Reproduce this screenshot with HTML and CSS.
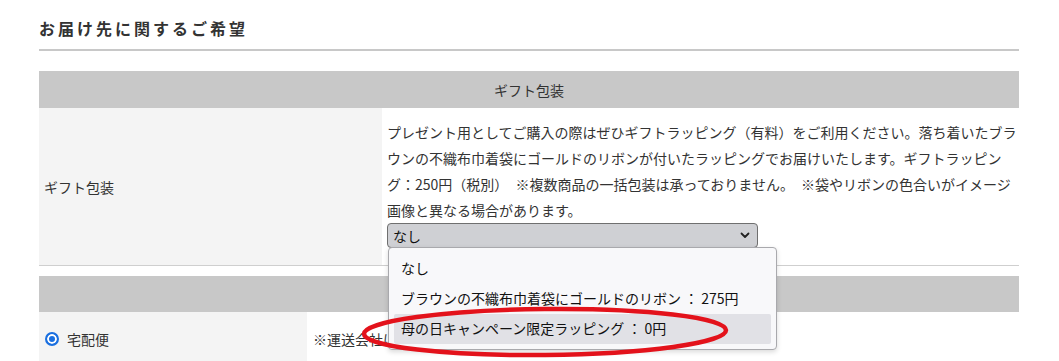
FILE: index.html
```html
<!DOCTYPE html>
<html lang="ja">
<head>
<meta charset="utf-8">
<title>お届け先に関するご希望</title>
<link rel="stylesheet" href="styles.css">
</head>
<body>
<div class="page">
  <h2 class="section-title">お届け先に関するご希望</h2>

  <div class="form-table gift">
    <div class="table-head">ギフト包装</div>
    <div class="table-row">
      <div class="cell-label">ギフト包装</div>
      <div class="cell-body">
        <p class="desc">プレゼント用としてご購入の際はぜひギフトラッピング（有料）をご利用ください。落ち着いたブラウンの不織布巾着袋にゴールドのリボンが付いたラッピングでお届けいたします。ギフトラッピング：250円（税別） ※複数商品の一括包装は承っておりません。 ※袋やリボンの色合いがイメージ画像と異なる場合があります。</p>
        <div class="select-wrap">
          <div class="select-box">
            <span>なし</span>
            <svg class="chevron" width="10" height="7" viewBox="0 0 10 7"><path d="M1.5 1.5 L5 5 L8.5 1.5" fill="none" stroke="#222" stroke-width="1.8" stroke-linecap="round" stroke-linejoin="round"/></svg>
          </div>
          <div class="select-popup">
            <div class="option">なし</div>
            <div class="option">ブラウンの不織布巾着袋にゴールドのリボン ： 275円</div>
            <div class="option option-hover">母の日キャンペーン限定ラッピング ： 0円</div>
          </div>
        </div>
      </div>
    </div>
  </div>

  <div class="form-table delivery">
    <div class="table-head"></div>
    <div class="table-row row-delivery">
      <div class="cell-label"><span class="radio"></span><span class="radio-label">宅配便</span></div>
      <div class="cell-note">※運送会社は指定できませんのでご了承ください。</div>
    </div>
  </div>

  <svg class="annotation" width="400" height="70" viewBox="0 0 400 70">
    <ellipse cx="190" cy="33" rx="181" ry="23" fill="none" stroke="#e3121b" stroke-width="4.5" transform="rotate(-0.6 190 33)"/>
  </svg>
</div>
</body>
</html>
```

FILE: styles.css
```css
html, body {
  margin: 0;
  padding: 0;
  background: #fff;
  overflow: hidden;
}

body {
  font-family: "Noto Sans CJK JP", "Noto Sans", sans-serif;
  color: #333;
  font-size: 14px;
}

.page {
  position: relative;
  width: 980px;
  height: 361px;
  padding-left: 39px;
}

.section-title {
  margin: 0;
  padding: 18px 0 11px;
  font-size: 16px;
  line-height: 20px;
  font-weight: bold;
  letter-spacing: 3px;
  color: #333;
  border-bottom: 2px solid #c8c8c8;
}

.form-table {
  width: 980px;
}

.gift {
  margin-top: 20px;
}

.delivery {
  margin-top: 10px;
}

.table-head {
  background: #c8c8c8;
  height: 37px;
  display: flex;
  align-items: center;
  justify-content: center;
  color: #333;
}

.delivery .table-head {
  height: 36px;
}

.table-row {
  display: grid;
  grid-template-columns: 343px 1fr;
  border-bottom: 1px solid #cfcfcf;
}

.cell-label {
  background: #f4f4f4;
  padding-left: 5px;
  display: flex;
  align-items: center;
}

.cell-body {
  padding: 11px 0 17px 5px;
}

.desc {
  margin: 0;
  line-height: 26px;
  width: 632px;
  word-spacing: 4px;
}

.select-wrap {
  position: relative;
  width: 371px;
}

.select-box {
  box-sizing: border-box;
  height: 25px;
  border: 1px solid #6f6f6f;
  border-radius: 4px;
  background: #cfd0d4;
  display: flex;
  align-items: center;
  justify-content: space-between;
  padding: 0 7px 0 5px;
  color: #111;
}

.select-popup {
  position: absolute;
  top: 24px;
  left: 1px;
  width: 389px;
  height: 103px;
  box-sizing: border-box;
  background: #f8f8fa;
  border: 1px solid #a9a9ad;
  border-radius: 4px;
  box-shadow: 0 2px 5px rgba(0, 0, 0, 0.15);
  padding: 6px 5px 0 5px;
  z-index: 2;
}

.option {
  height: 30px;
  line-height: 29px;
  padding-left: 7px;
  color: #111;
  border-radius: 2px;
  white-space: nowrap;
}

.option-hover {
  background: #e1e1e6;
}

.row-delivery {
  grid-template-columns: 268px 1fr;
  border-bottom: none;
  height: 54px;
}

.row-delivery .cell-label {
  padding-left: 6px;
}

.radio {
  box-sizing: border-box;
  width: 14px;
  height: 14px;
  border-radius: 50%;
  border: 2px solid #1a6fe0;
  background: #1a6fe0;
  box-shadow: inset 0 0 0 2px #fff;
}

.radio-label {
  margin-left: 8px;
}

.cell-note {
  padding-left: 6px;
  display: flex;
  align-items: center;
  white-space: nowrap;
  overflow: hidden;
}

.annotation {
  position: absolute;
  left: 355px;
  top: 299px;
  z-index: 3;
}
```
